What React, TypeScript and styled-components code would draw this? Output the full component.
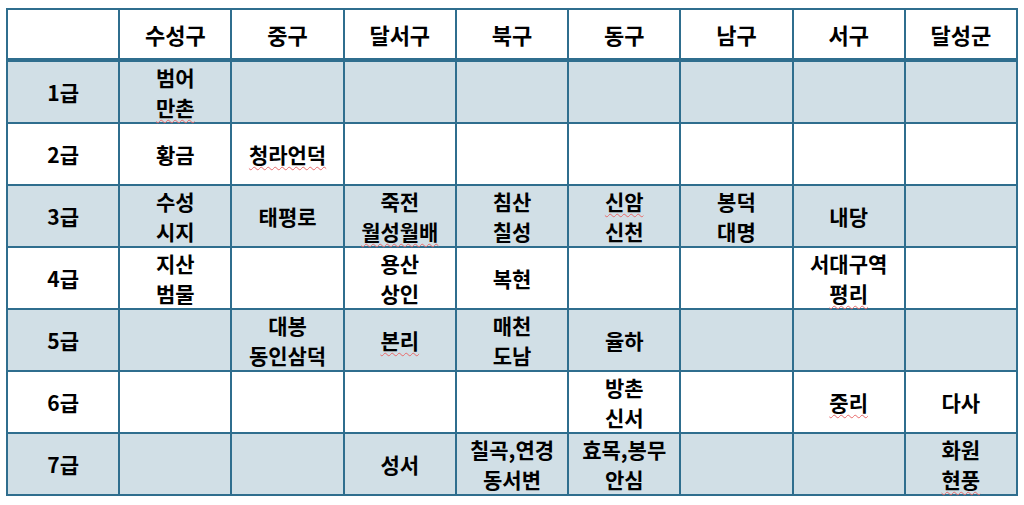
import React from 'react';
import styled, { createGlobalStyle } from 'styled-components';

const GlobalStyle = createGlobalStyle`
  html, body {
    margin: 0;
    padding: 0;
    background: #ffffff;
  }
  body {
    font-family: 'Noto Sans CJK KR', 'Noto Sans', sans-serif;
  }
`;

// '~' prefix = word flagged with the red spell-check squiggle
const districts = ['수성구', '중구', '달서구', '북구', '동구', '남구', '서구', '달성군'];

const grades: { label: string; cells: string[][] }[] = [
  { label: '1급', cells: [['범어', '~만촌'], [], [], [], [], [], [], []] },
  { label: '2급', cells: [['황금'], ['~청라언덕'], [], [], [], [], [], []] },
  {
    label: '3급',
    cells: [['수성', '시지'], ['태평로'], ['죽전', '~월성월배'], ['침산', '칠성'], ['~신암', '신천'], ['봉덕', '대명'], ['내당'], []],
  },
  {
    label: '4급',
    cells: [['지산', '범물'], [], ['용산', '상인'], ['복현'], [], [], ['서대구역', '~평리'], []],
  },
  { label: '5급', cells: [[], ['대봉', '동인삼덕'], ['~본리'], ['매천', '도남'], ['율하'], [], [], []] },
  { label: '6급', cells: [[], [], [], [], ['방촌', '신서'], [], ['~중리'], ['다사']] },
  {
    label: '7급',
    cells: [[], [], ['성서'], ['칠곡,연경', '동서변'], ['효목,봉무', '안심'], [], [], ['화원', '~현풍']],
  },
];

const Page = styled.div`
  padding: 8px 0 0 6px;
`;

const Grid = styled.table`
  width: 1012px;
  table-layout: fixed;
  border-collapse: collapse;
  border: 2px solid #2f6e8e;
`;

const HeadCell = styled.th`
  height: 48px;
  border: 2px solid #2f6e8e;
  border-bottom-width: 4px;
  background: #ffffff;
  font-size: 22px;
  font-weight: 700;
  color: #000000;
  text-align: center;
  vertical-align: middle;
  padding: 0;
`;

const Row = styled.tr<{ $shaded: boolean }>`
  height: 62px;
  background: ${(p) => (p.$shaded ? '#d1dfe6' : '#ffffff')};
`;

const Cell = styled.td`
  border: 2px solid #2f6e8e;
  font-size: 21px;
  font-weight: 700;
  color: #000000;
  text-align: center;
  vertical-align: middle;
  line-height: 30px;
  padding: 0;
`;

const Line = styled.div`
  white-space: nowrap;
`;

const Flagged = styled.span`
  text-decoration: underline wavy #e86a6a;
  text-decoration-thickness: 1px;
  text-underline-offset: 3px;
`;

const Words = ({ lines }: { lines: string[] }) => (
  <>
    {lines.map((l, i) => (
      <Line key={i}>{l.startsWith('~') ? <Flagged>{l.slice(1)}</Flagged> : l}</Line>
    ))}
  </>
);

export default function App() {
  return (
    <Page>
      <GlobalStyle />
      <Grid>
        <thead>
          <tr>
            <HeadCell />
            {districts.map((d) => (
              <HeadCell key={d}>{d}</HeadCell>
            ))}
          </tr>
        </thead>
        <tbody>
          {grades.map((g, i) => (
            <Row key={g.label} $shaded={i % 2 === 0}>
              <Cell>{g.label}</Cell>
              {g.cells.map((c, j) => (
                <Cell key={j}>
                  <Words lines={c} />
                </Cell>
              ))}
            </Row>
          ))}
        </tbody>
      </Grid>
    </Page>
  );
}
